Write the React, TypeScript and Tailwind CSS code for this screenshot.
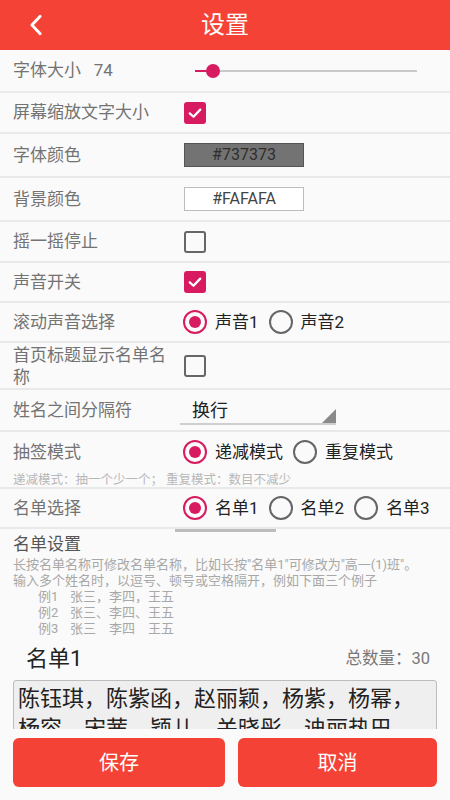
import type { ReactNode } from "react";

const FONT = { fontFamily: 'Roboto, "Noto Sans CJK SC", sans-serif' };

function Row({ label, h, children, wrap }: { label: string; h: string; children?: ReactNode; wrap?: boolean }) {
  return (
    <div className={`flex items-center border-b-2 border-[#e9e9e9] ${h}`}>
      <div
        className={`w-[183px] shrink-0 pl-[13px] pr-[12px] text-[17px] text-[#737373] ${
          wrap ? "leading-[22px]" : "whitespace-pre leading-none"
        }`}
      >
        {label}
      </div>
      {children}
    </div>
  );
}

function Checkbox({ checked }: { checked?: boolean }) {
  if (checked) {
    return (
      <span className="ml-px grid size-[22px] place-items-center rounded-[3px] bg-[#d81b60]">
        <svg viewBox="0 0 24 24" className="size-[18px]" fill="none" stroke="white" strokeWidth="3" strokeLinecap="round" strokeLinejoin="round">
          <polyline points="5,12.5 10,17 19,7.5" />
        </svg>
      </span>
    );
  }
  return <span className="ml-px block size-[22px] rounded-[3px] border-2 border-[#666]" />;
}

function Radio({ checked, label }: { checked?: boolean; label: string }) {
  return (
    <span className="flex items-center">
      <span
        className={`grid size-[24px] place-items-center rounded-full border-2 ${checked ? "border-[#d81b60]" : "border-[#666]"}`}
      >
        {checked ? <span className="size-[12px] rounded-full bg-[#d81b60]" /> : null}
      </span>
      <span className="ml-[8px] mr-[10px] text-[17px] leading-none text-[#222]">{label}</span>
    </span>
  );
}

function ColorBox({ value, dark }: { value: string; dark?: boolean }) {
  return (
    <span
      className={`ml-px flex h-[24px] w-[120px] items-center justify-center border text-[16px] leading-none ${
        dark ? "border-[#555] bg-[#737373] text-[#2e2e2e]" : "border-[#bdbdbd] bg-white text-[#444]"
      }`}
    >
      {value}
    </span>
  );
}

export default function App() {
  return (
    <div className="flex h-[800px] w-[450px] flex-col overflow-hidden bg-[#fafafa]" style={FONT}>
      <header className="relative flex h-[50px] shrink-0 items-center justify-center bg-[#f44336]">
        <svg viewBox="0 0 16 24" className="absolute left-[29px] top-[14px] h-[22px] w-[15px]" fill="none" stroke="white" strokeWidth="3.2" strokeLinecap="round" strokeLinejoin="round">
          <polyline points="12,2.5 3,12 12,21.5" />
        </svg>
        <h1 className="text-[24px] leading-none text-white">设置</h1>
      </header>

      <main className="min-h-0 flex-1 overflow-hidden">
        <Row label="字体大小   74" h="h-[43px]">
          <div className="relative ml-[12px] h-[14px] w-[222px]">
            <span className="absolute left-0 right-0 top-[6px] h-[2px] bg-[#c9c9c9]" />
            <span className="absolute left-0 top-[6px] h-[2px] w-[18px] bg-[#d81b60]" />
            <span className="absolute left-[11px] top-0 size-[14px] rounded-full bg-[#d81b60]" />
          </div>
        </Row>
        <Row label="屏幕缩放文字大小" h="h-[41px]">
          <Checkbox checked />
        </Row>
        <Row label="字体颜色" h="h-[44px]">
          <ColorBox value="#737373" dark />
        </Row>
        <Row label="背景颜色" h="h-[44px]">
          <ColorBox value="#FAFAFA" />
        </Row>
        <Row label="摇一摇停止" h="h-[41px]">
          <Checkbox />
        </Row>
        <Row label="声音开关" h="h-[40px]">
          <Checkbox checked />
        </Row>
        <Row label="滚动声音选择" h="h-[40px]">
          <Radio checked label="声音1" />
          <Radio label="声音2" />
        </Row>
        <Row label="首页标题显示名单名称" h="h-[47px]" wrap>
          <Checkbox />
        </Row>
        <Row label="姓名之间分隔符" h="h-[42px]">
          <div className="relative -ml-[3px] flex h-[30px] w-[156px] items-center border-b-2 border-[#cfcfcf] pl-[12px] pt-[4px]">
            <span className="text-[18px] leading-none text-[#222]">换行</span>
            <svg viewBox="0 0 14 14" className="absolute bottom-0 right-0 size-[14px]">
              <polygon points="14,0 14,14 0,14" fill="#8a8a8a" />
            </svg>
          </div>
        </Row>
        <div className="h-[57px] border-b-2 border-[#e9e9e9]">
          <div className="flex h-[40px] items-center">
            <div className="w-[183px] shrink-0 pl-[13px] text-[17px] leading-none text-[#737373]">抽签模式</div>
            <Radio checked label="递减模式" />
            <Radio label="重复模式" />
          </div>
          <p className="pl-[13px] pt-[2px] text-[12.5px] leading-none text-[#b8b8b8]">递减模式：抽一个少一个； 重复模式：数目不减少</p>
        </div>
        <Row label="名单选择" h="h-[40px]">
          <div className="relative flex">
            <Radio checked label="名单1" />
            <Radio label="名单2" />
            <Radio label="名单3" />
            <span className="absolute -left-[8px] top-[33px] h-[3px] w-[101px] bg-[#bdbdbd]" />
          </div>
        </Row>

        <section className="pt-[6px]">
          <h2 className="pl-[13px] text-[17px] leading-[18px] text-[#555]">名单设置</h2>
          <div className="mt-[4px] pl-[13px] text-[13px] leading-[16px] text-[#a8a8a8]">
            <p>长按名单名称可修改名单名称，比如长按"名单1"可修改为"高一(1)班"。</p>
            <p>输入多个姓名时，以逗号、顿号或空格隔开，例如下面三个例子</p>
            <div className="pl-[25px]">
              {[
                ["例1", "张三，李四，王五"],
                ["例2", "张三、李四、王五"],
                ["例3", "张三　李四　王五"],
              ].map(([k, v]) => (
                <p key={k} className="flex whitespace-pre">
                  <span className="w-[32px]">{k}</span>
                  <span>{v}</span>
                </p>
              ))}
            </div>
          </div>
          <div className="mt-[11px] flex items-center justify-between pl-[26px] pr-[20px]">
            <span className="text-[22px] leading-none text-[#222]">名单1</span>
            <span className="text-[16.5px] leading-none text-[#777]">总数量：30</span>
          </div>
          <div className="mx-[13px] mt-[10px] h-[70px] overflow-hidden rounded-[3px] border border-[#bdbdbd] bg-[#efefef] px-[4px] pt-[3px] text-[22px] leading-[30px] text-[#222]">
            陈钰琪，陈紫函，赵丽颖，杨紫，杨幂，杨容，宋茜，颖儿，关晓彤，迪丽热巴，
          </div>
        </section>
      </main>

      <footer className="flex h-[71px] shrink-0 gap-[13px] px-[13px] pt-[9px] pb-[13px]">
        <button className="flex-1 rounded-[6px] bg-[#f44336] text-[20px] text-white">保存</button>
        <button className="w-[199px] rounded-[6px] bg-[#f44336] text-[20px] text-white">取消</button>
      </footer>
    </div>
  );
}
